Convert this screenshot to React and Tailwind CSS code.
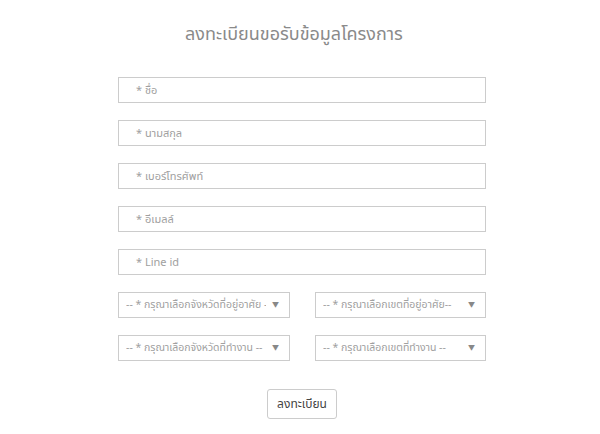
import React from "react";

const Field = ({ ph }) => (
  <div className="h-[26px] w-[368px] border border-[#cccccc] bg-white flex items-center pl-[17px] text-[11px] text-[#a0a0a0]">
    {ph}
  </div>
);

const Sel = ({ ph, w }) => (
  <div className={`h-[26px] ${w} border border-[#cccccc] bg-white flex items-center pl-[7px] pr-[10px] text-[10.5px] text-[#a0a0a0]`}>
    <span className="flex-1 min-w-0 whitespace-nowrap overflow-hidden">{ph}</span>
    <span className="ml-[6px] text-[7px] text-[#888]">▼</span>
  </div>
);

export default function App() {
  return (
    <div className="w-[600px] h-[434px] bg-white flex flex-col items-center" style={{ fontFamily: '"Noto Sans", "Noto Sans Thai", "Noto Sans CJK SC", sans-serif' }}>
      <div className="mt-[20px] mr-[12px] text-[18px] text-[#8a8a8a] leading-[26px]">ลงทะเบียนขอรับข้อมูลโครงการ</div>
      <div className="mt-[31px] ml-[4px] w-[368px] flex flex-col gap-[17px]">
        <Field ph="* ชื่อ" />
        <Field ph="* นามสกุล" />
        <Field ph="* เบอร์โทรศัพท์" />
        <Field ph="* อีเมลล์" />
        <Field ph="* Line id" />
        <div className="flex justify-between">
          <Sel w="w-[172px]" ph="-- * กรุณาเลือกจังหวัดที่อยู่อาศัย --" />
          <Sel w="w-[171px]" ph="-- * กรุณาเลือกเขตที่อยู่อาศัย--" />
        </div>
        <div className="flex justify-between">
          <Sel w="w-[172px]" ph="-- * กรุณาเลือกจังหวัดที่ทำงาน --" />
          <Sel w="w-[171px]" ph="-- * กรุณาเลือกเขตที่ทำงาน --" />
        </div>
      </div>
      <div className="mt-[28px] ml-[4px] h-[30px] w-[70px] border border-[#cccccc] rounded-[3px] flex items-center justify-center text-[12px] text-[#444]">
        ลงทะเบียน
      </div>
    </div>
  );
}
